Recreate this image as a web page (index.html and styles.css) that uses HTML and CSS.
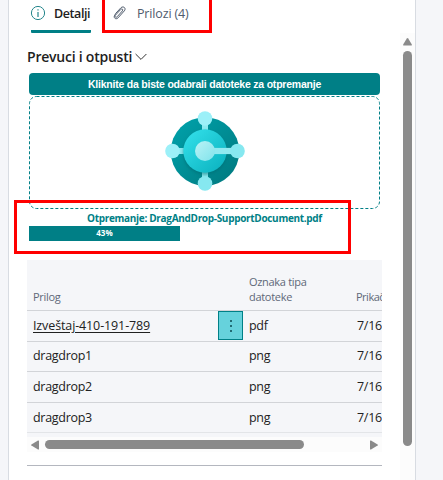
FILE: index.html
```html
<!DOCTYPE html>
<html lang="sr-Latn">
<head>
<meta charset="utf-8">
<title>Prilozi</title>
<link rel="stylesheet" href="styles.css">
</head>
<body>
<div class="panel">
  <nav class="tabs">
    <div class="tab tab-details">
      <svg class="info" width="16" height="16" viewBox="0 0 16 16" fill="none" stroke="#24868c"><circle cx="8" cy="8" r="6.6"/><path d="M8 7v5M8 4.2v1.4" stroke-width="1.2"/></svg>
      <span class="t-details">Detalji</span>
    </div>
    <div class="tab tab-files">
      <svg width="14" height="16" viewBox="0 0 14 16" fill="none" stroke="#505c6d" stroke-width="1"><path d="M2.500 8.600 7.800 2.900C10.300.4 13.600 3.300 11.300 5.900L5 12.900C2.800 15.100-.2 12.500 1.900 10.100M2.500 8.600 1.900 10.100M4.200 11.700 9.400 5.900C10.500 4.400 8.900 3.200 7.700 4.500L2.200 10.400C1.300 11.700 2.900 13.100 4.200 11.700"/></svg>
      <span class="t-files">Prilozi (4)</span>
    </div>
  </nav>
  <div class="body">
    <main class="content">
      <h2 class="heading"><span>Prevuci i otpusti</span><svg width="12" height="8" viewBox="0 0 12 8" fill="none" stroke="#333"><path d="M.6 1 6 6.4 11.4 1"/></svg></h2>
      <button class="upload"><span>Kliknite da biste odabrali datoteke za otpremanje</span></button>
      <div class="drop">
        <svg class="outline" width="351" height="113"><rect x=".5" y=".5" width="350" height="112" rx="7" fill="none" stroke="#007f86" stroke-dasharray="3 2"/></svg>
        <svg class="logo" width="82" height="82" viewBox="0 0 82 82">
          <defs>
            <linearGradient id="outer" x1="0" y1="0" x2="1" y2="1"><stop stop-color="#00a4ad"/><stop offset="1" stop-color="#00777d"/></linearGradient>
            <linearGradient id="inner" x1="0" y1="0" x2="1" y2="1"><stop stop-color="#35e2ec"/><stop offset="1" stop-color="#09b0bd"/></linearGradient>
            <linearGradient id="core" x1="0" y1="0" x2="1" y2="1"><stop stop-color="#baf3f6"/><stop offset="1" stop-color="#80e3eb"/></linearGradient>
            <filter id="soft" x="-20%" y="-20%" width="140%" height="140%"><feGaussianBlur stdDeviation="1.5"/></filter>
          </defs>
          <circle cx="41" cy="41.500" r="34.300" fill="url(#outer)"/>
          <path d="M41 8v12M41 62v12M8 41h12" stroke="#8beaf0" stroke-width="6"/>
          <circle cx="41" cy="43" r="22" fill="#006c73" opacity=".5" filter="url(#soft)"/>
          <circle cx="41" cy="41" r="21.700" fill="url(#inner)"/>
          <path d="M41 41h32" stroke="#91e9f0" stroke-width="6.200"/>
          <circle cx="41" cy="41" r="10" fill="url(#core)"/>
          <g fill="#9cf0f8"><circle cx="41" cy="8.500" r="7.300"/><circle cx="8.500" cy="41" r="7.300"/></g>
          <g fill="#86e8f0"><circle cx="73.500" cy="41" r="7.300"/><circle cx="41" cy="73.500" r="7.300"/></g>
        </svg>
      </div>
      <div class="status"><span>Otpremanje: DragAndDrop-SupportDocument.pdf</span></div>
      <div class="progress"><div class="bar" style="width:43%">43%</div></div>
      <section class="grid">
        <div class="row head"><div class="name">Prilog</div><div class="more"></div><div class="type">Oznaka tipa<br>datoteke</div><div class="date">Prikačeno</div></div>
        <div class="row"><div class="name"><span class="link">Izveštaj-410-191-789</span></div><div class="more"><span class="menu"><i></i><i></i><i></i></span></div><div class="type">pdf</div><div class="date">7/16</div></div>
        <div class="row"><div class="name">dragdrop1</div><div class="more"></div><div class="type">png</div><div class="date">7/16</div></div>
        <div class="row"><div class="name">dragdrop2</div><div class="more"></div><div class="type">png</div><div class="date">7/16</div></div>
        <div class="row last"><div class="name">dragdrop3</div><div class="more"></div><div class="type">png</div><div class="date">7/16</div></div>
        <div class="hscroll">
          <svg width="8" height="10" viewBox="0 0 8 10" fill="#8a8a8a"><path d="M7 .5Q8 .2 8 1v8q0 .8-1 .5L.4 5.5Q-.1 5 .4 4.500z"/></svg>
          <div class="hthumb"></div>
          <svg width="8" height="10" viewBox="0 0 8 10" fill="#8a8a8a"><path d="M1 .5Q0 .2 0 1v8q0 .8 1 .5L7.600 5.500Q8.100 5 7.600 4.500z"/></svg>
        </div>
      </section>
      <div class="divider"></div>
    </main>
    <aside class="vscroll">
      <svg width="9" height="8" viewBox="0 0 9 8" fill="#8a8a8a"><path d="M3.800.5q.7-.8 1.400 0l3.500 5.800Q9.300 7.500 8 7.500H1Q-.3 7.500.3 6.300z"/></svg>
      <div class="vthumb"></div>
    </aside>
  </div>
</div>
<div class="mark mark-tab"></div>
<div class="mark mark-progress"></div>
</body>
</html>
```
FILE: styles.css
```css
* { box-sizing: border-box; }
body {
  margin: 0;
  height: 480px;
  position: relative;
  overflow: hidden;
  background: #f5f6f9;
  color: #212121;
  font: 12.5px/16px "Open Sans", sans-serif;
}
.panel {
  width: 408px;
  height: 480px;
  margin-left: 8px;
  background: #fff;
  border: solid #d8dce2;
  border-width: 0 1px;
}
.tabs { display: flex; height: 33px; padding-left: 22px; }
.tab { display: flex; height: 33px; padding-top: 5px; white-space: nowrap; }
.tab-details { width: 60px; border-bottom: 3px solid #007f86; border-radius: 1px; }
.t-details { margin: 1px 0 0 8px; font-weight: 600; letter-spacing: -.42px; }
.info { margin-left: -1px; flex: none; }
.tab-files { margin-left: 22px; color: #505c6d; }
.t-files { margin: 1px 0 0 10px; letter-spacing: -.15px; }
.body { display: flex; justify-content: space-between; height: 447px; }
.content { width: 355px; margin-left: 18px; }
.heading {
  display: flex;
  align-items: center;
  gap: 2px;
  height: 20px;
  margin: 14px 0 6px;
  font-size: 14px;
  font-weight: 600;
  letter-spacing: -.23px;
}
.heading span { width: 106px; white-space: nowrap; }
.upload {
  display: block;
  width: 351px;
  height: 22px;
  margin-left: 2px;
  padding: 0;
  border: 0;
  border-radius: 4px;
  background: #007f86;
  color: #fff;
  font: bold 10.5px/22px "Liberation Sans", sans-serif;
  letter-spacing: -.22px;
}
.drop {
  position: relative;
  display: flex;
  justify-content: center;
  width: 351px;
  height: 113px;
  margin: 1px 0 0 2px;
  padding-top: 14px;
}
.outline { position: absolute; inset: 0; }
.status {
  width: 351px;
  height: 17px;
  margin-left: 2px;
  color: #007f86;
  font-size: 10px;
  line-height: 19px;
  font-weight: 700;
  text-align: center;
  white-space: nowrap;
  letter-spacing: -.31px;
}
.progress { width: 351px; margin-left: 2px; }
.bar {
  height: 15px;
  background: #007f86;
  color: #fff;
  text-align: center;
  font: bold 8px/14px "Open Sans", sans-serif;
}
.grid { margin-top: 19px; height: 192px; overflow: hidden; background: #f5f6f9; }
.row {
  display: grid;
  grid-template-columns: 191px 25px 114px 25px;
  height: 30.600px;
  align-items: center;
  border-bottom: 1px solid #d2d4d8;
  letter-spacing: -.3px;
}
.row > div { white-space: nowrap; }
.row .date { overflow: hidden; }
.row.head {
  height: 51px;
  align-items: end;
  padding-bottom: 6px;
  color: #606878;
  font-size: 11px;
  line-height: 15px;
}
.row.head .date { letter-spacing: -.5px; margin-left: -1px; }
.row.last { border-color: #e3e5e8; }
.name { padding-left: 6px; }
.type { padding-left: 6px; }
.link { text-decoration: underline; text-underline-offset: 2px; letter-spacing: -.12px; }
.menu {
  display: flex;
  flex-direction: column;
  align-items: center;
  justify-content: center;
  gap: 3px;
  width: 25px;
  height: 29px;
  border: 1px solid #008087;
  background: #66d2dc;
}
.menu i { width: 2px; height: 2px; background: #216c74; }
.hscroll {
  display: flex;
  align-items: center;
  height: 15px;
  margin-top: 4px;
  padding: 0 4px;
  background: #fcfcfc;
}
.hthumb { width: 259px; height: 9px; margin: 0 66px 0 6px; border-radius: 5px; background: #8a8a8a; }
.hscroll svg { flex: none; }
.divider { margin-top: 13px; height: 1px; background: #b4b7bf; }
.vscroll {
  width: 15px;
  padding: 5px 0 0 3px;
  background: #fcfcfc;
  height: 447px;
}
.vscroll svg { display: block; }
.vthumb { width: 9px; height: 395px; margin-top: 5px; border-radius: 5px; background: #8a8a8a; }
.mark { position: absolute; border: 3px solid #f00; }
.mark-tab { left: 102px; top: -4px; width: 110px; height: 37px; }
.mark-progress { left: 14px; top: 200px; width: 337px; height: 54px; }
```
